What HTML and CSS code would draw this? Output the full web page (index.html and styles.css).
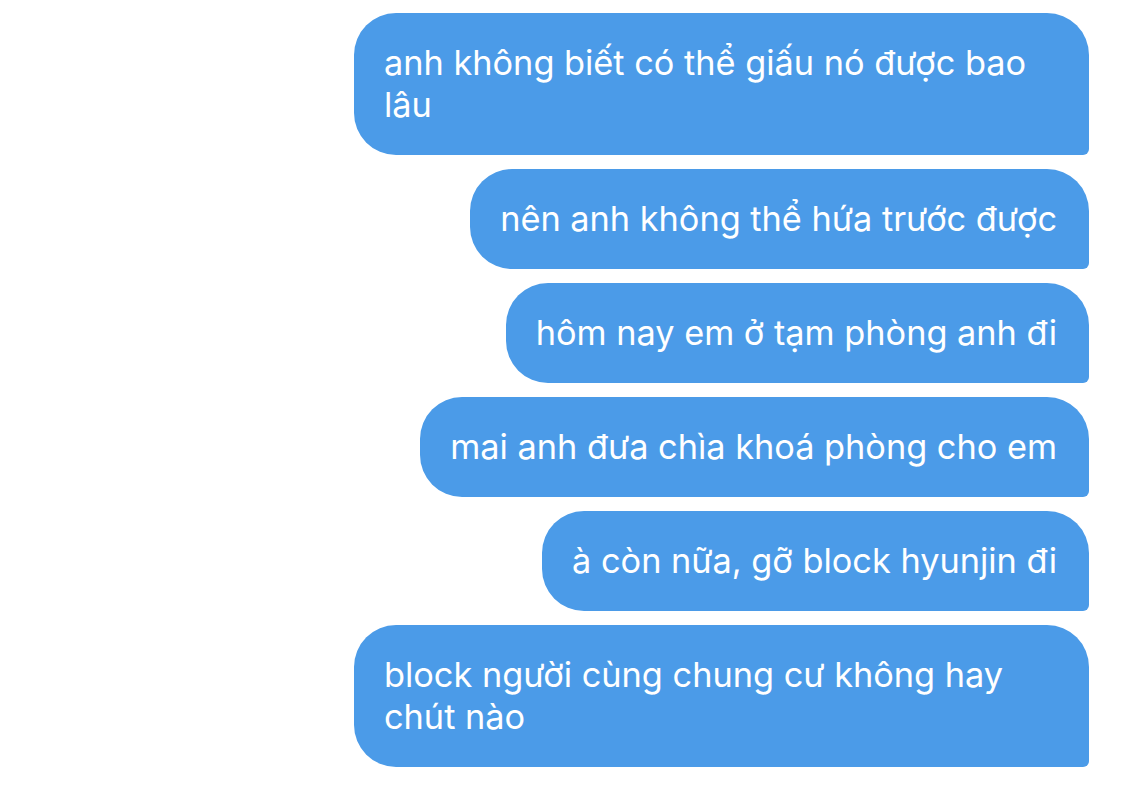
FILE: index.html
```html
<!DOCTYPE html>
<html lang="vi">
<head>
    <meta charset="UTF-8">
    <meta name="viewport" content="width=device-width, initial-scale=1.0">
    <title>Tin nhắn</title>
    <link rel="stylesheet" href="styles.css">
</head>
<body>
    <div class="thread">
        <div class="bubble">anh không biết có thể giấu nó được bao lâu</div>
        <div class="bubble">nên anh không thể hứa trước được</div>
        <div class="bubble">hôm nay em ở tạm phòng anh đi</div>
        <div class="bubble">mai anh đưa chìa khoá phòng cho em</div>
        <div class="bubble">à còn nữa, gỡ block hyunjin đi</div>
        <div class="bubble">block người cùng chung cư không hay chút nào</div>
    </div>
</body>
</html>
```

FILE: styles.css
```css
body {
    margin: 0;
    background: #ffffff;
    font-family: Inter, "Noto Sans", sans-serif;
}
.thread {
    display: flex;
    flex-direction: column;
    align-items: flex-end;
    gap: 14px;
    padding: 13px 36px 13px 37px;
}
.bubble {
    box-sizing: border-box;
    max-width: 735px;
    padding: 29px 32px 29px 30px;
    background: #4b9be8;
    color: #ffffff;
    font-size: 34.3px;
    line-height: 42px;
    border-radius: 42px 42px 6px 42px;
}
```
